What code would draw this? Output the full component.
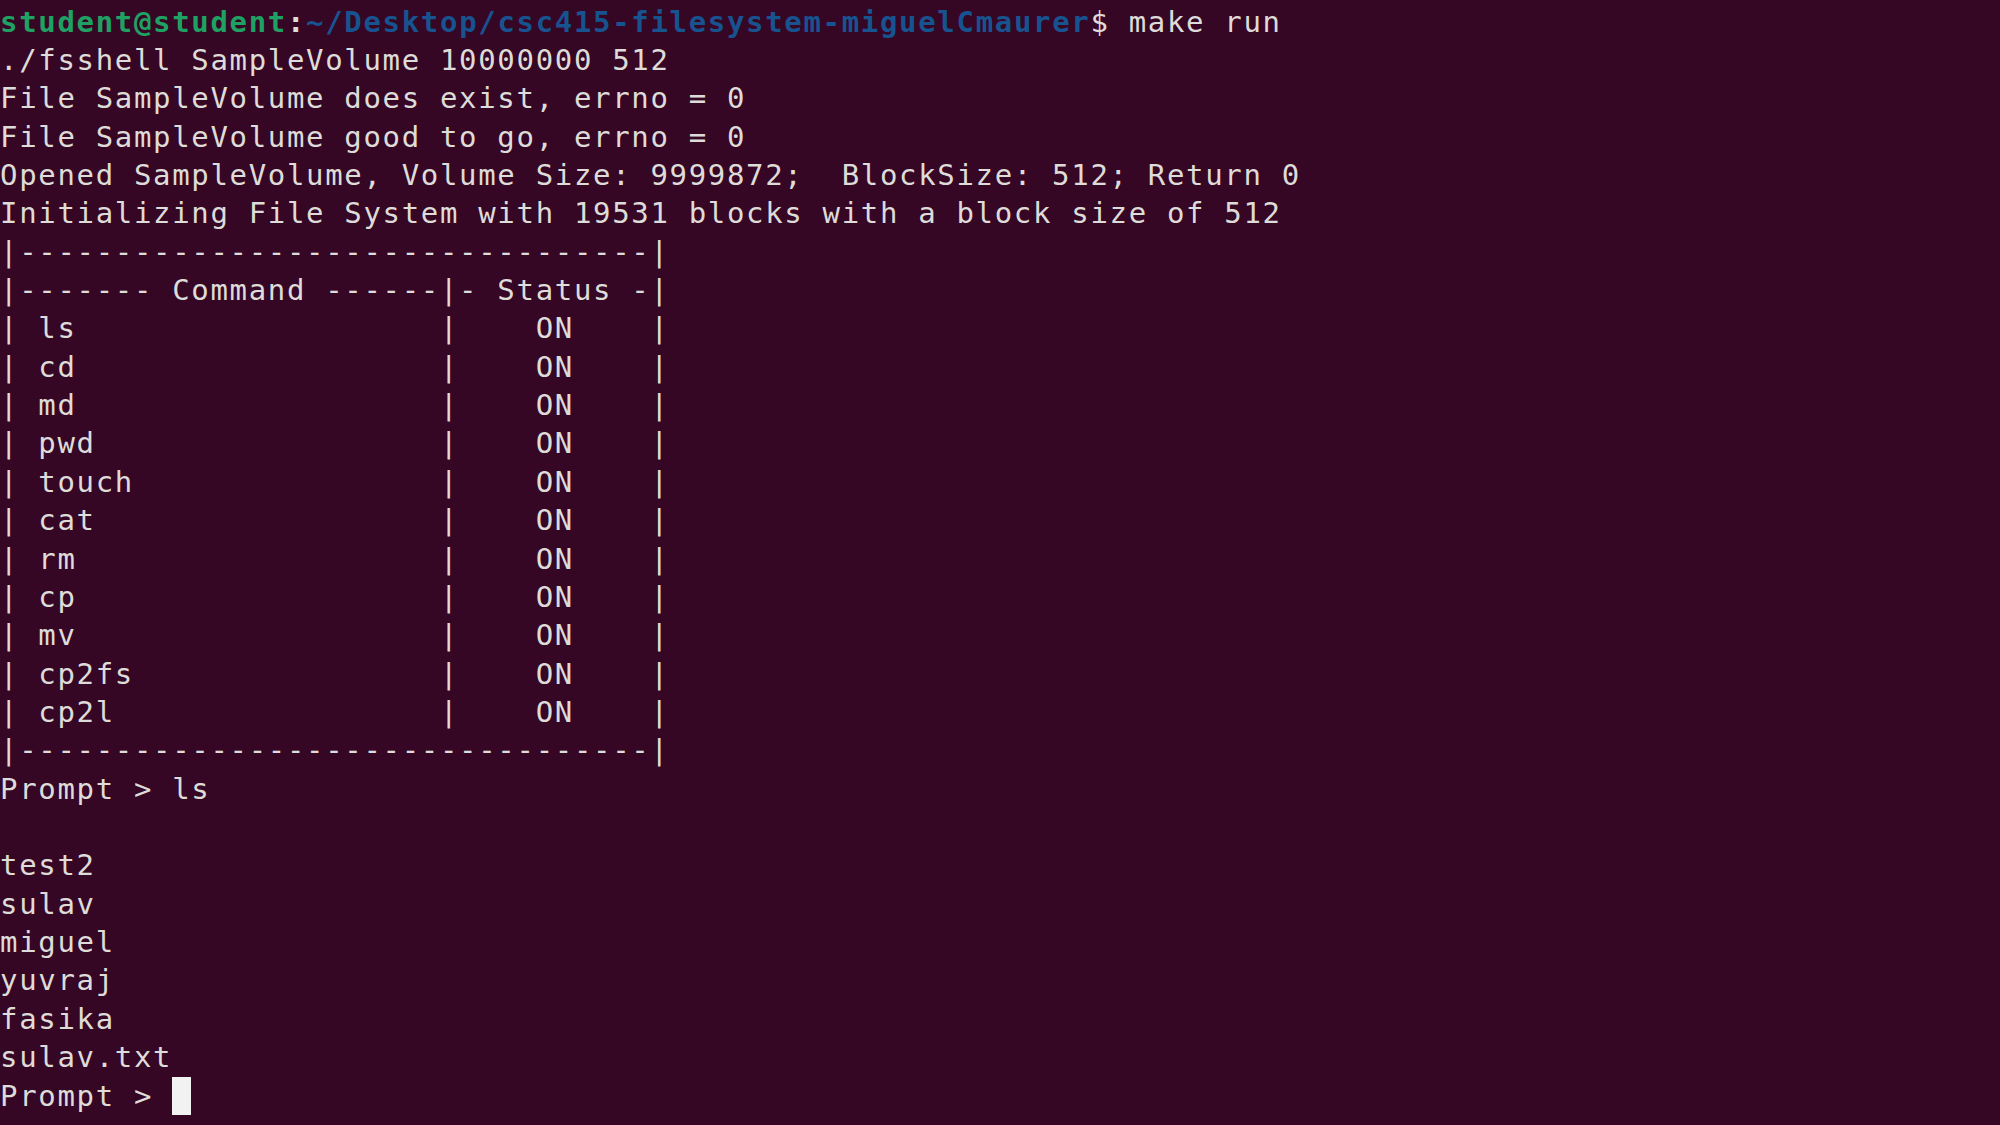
import React from 'react';

const commands = ['ls', 'cd', 'md', 'pwd', 'touch', 'cat', 'rm', 'cp', 'mv', 'cp2fs', 'cp2l'];
const listing = ['test2', 'sulav', 'miguel', 'yuvraj', 'fasika', 'sulav.txt'];

const divider = '|' + '-'.repeat(33) + '|';

const Line = ({ children }) => (
  <div className="h-[38.36px] leading-[38.36px] whitespace-pre">{children}</div>
);

export default function App() {
  return (
    <div
      className="w-[2000px] h-[1125px] overflow-hidden bg-[#360625] text-[#dedcd8] text-[29px] tracking-[1.67px] pt-[2.5px]"
      style={{ fontFamily: '"DejaVu Sans Mono", "Liberation Mono", monospace' }}
    >
      {/* Shell prompt */}
      <Line>
        <span className="font-bold text-[#1fa163]">student@student</span>
        <span className="font-bold">:</span>
        <span className="font-bold text-[#17538f]">~/Desktop/csc415-filesystem-miguelCmaurer</span>
        <span>$ make run</span>
      </Line>
      <Line>./fsshell SampleVolume 10000000 512</Line>
      <Line>File SampleVolume does exist, errno = 0</Line>
      <Line>File SampleVolume good to go, errno = 0</Line>
      <Line>Opened SampleVolume, Volume Size: 9999872;  BlockSize: 512; Return 0</Line>
      <Line>Initializing File System with 19531 blocks with a block size of 512</Line>

      {/* Command table */}
      <Line>{divider}</Line>
      <Line>|------- Command ------|- Status -|</Line>
      {commands.map((cmd) => (
        <Line key={cmd}>{'| ' + cmd.padEnd(21, ' ') + '|    ON    |'}</Line>
      ))}
      <Line>{divider}</Line>

      <Line>Prompt &gt; ls</Line>
      <Line> </Line>
      {listing.map((name) => (
        <Line key={name}>{name}</Line>
      ))}
      <Line>
        Prompt &gt; <span className="inline-block align-top w-[19px] h-[38px] bg-[#f2f2f2]" />
      </Line>
    </div>
  );
}
